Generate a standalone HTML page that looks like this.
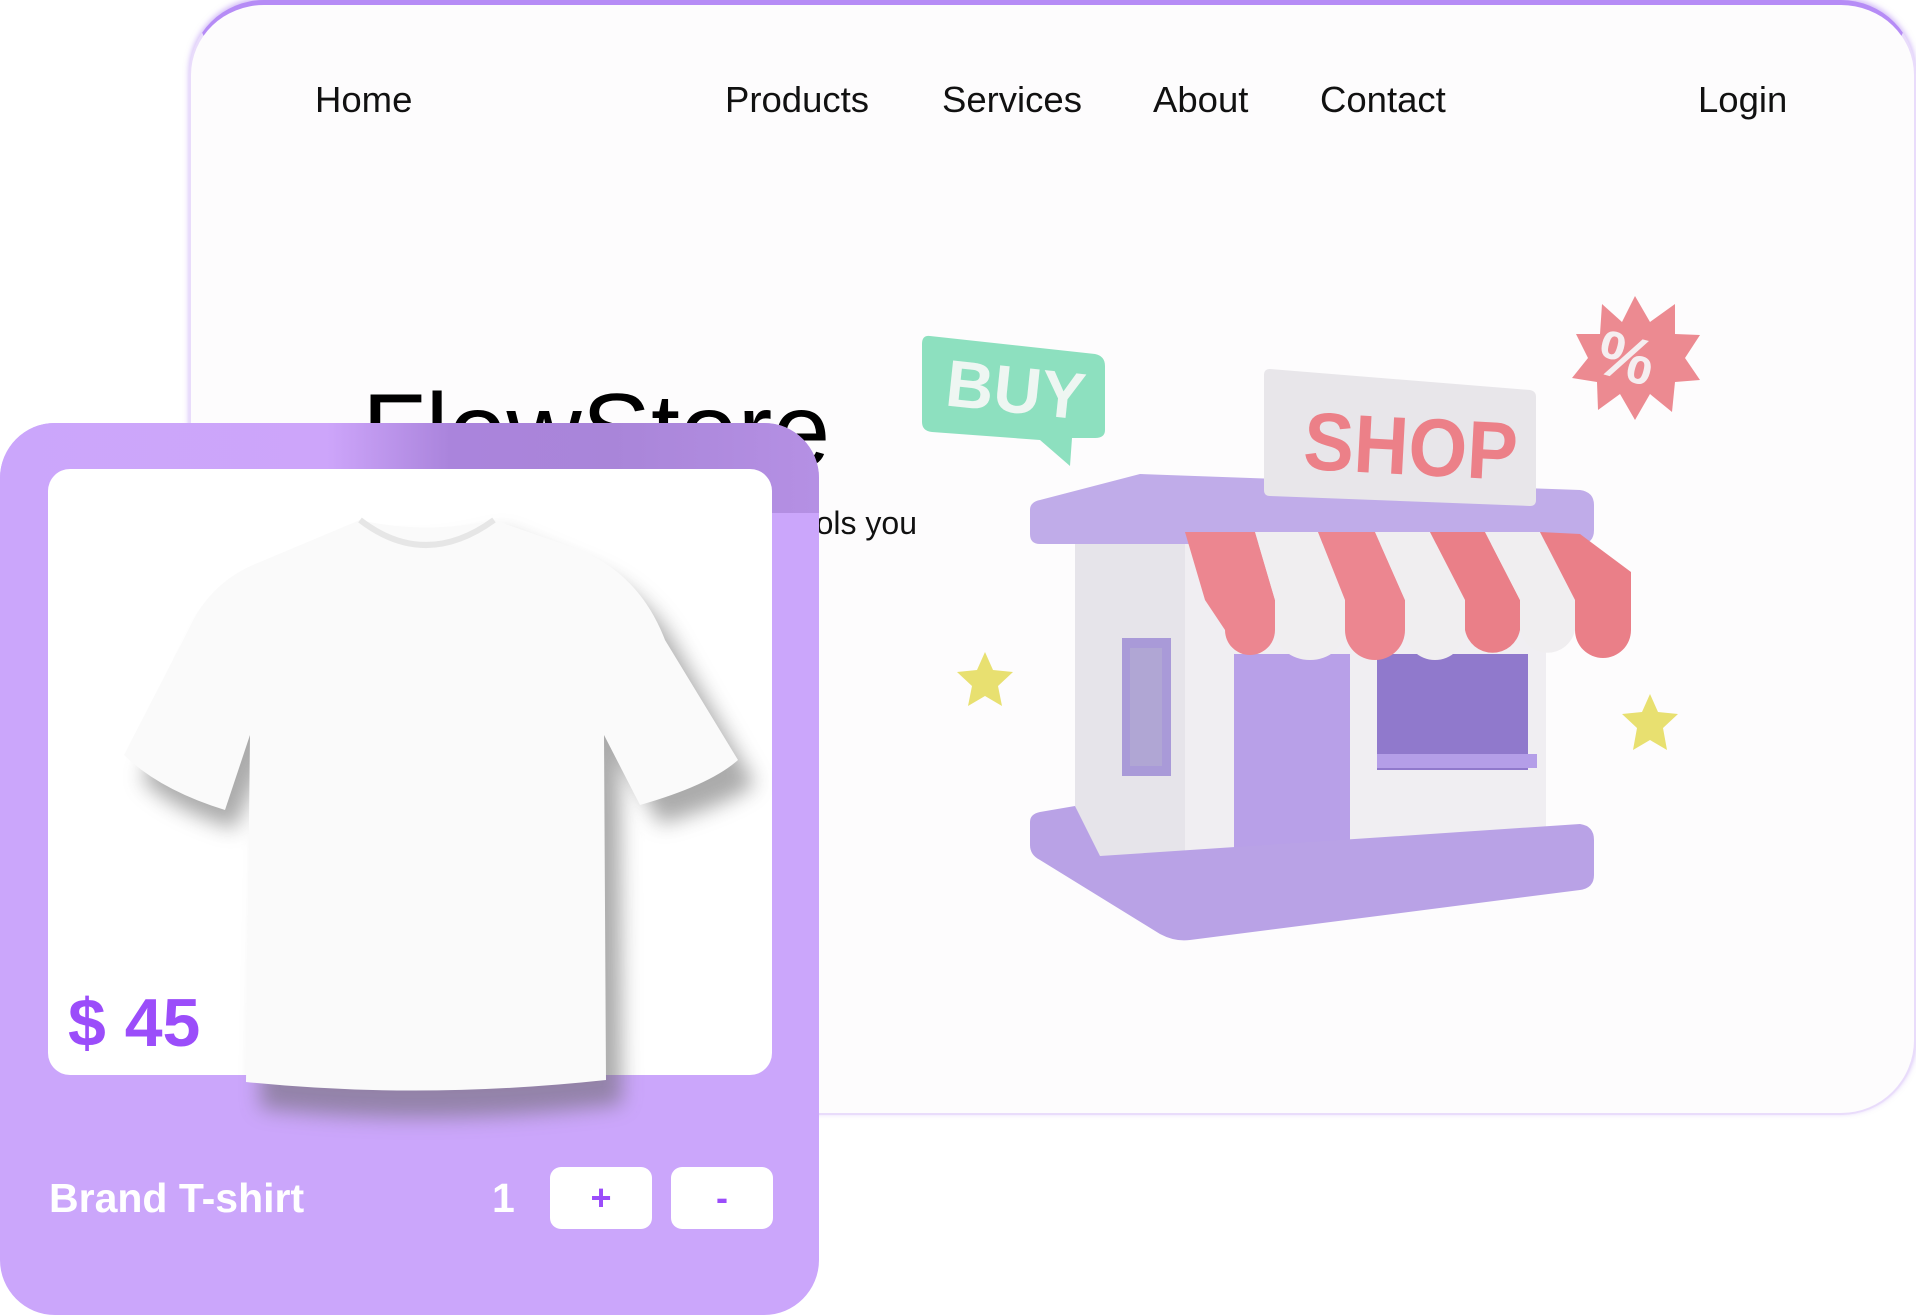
<!DOCTYPE html>
<html><head><meta charset="utf-8"><style>
*{margin:0;padding:0;box-sizing:border-box}
body{width:1916px;height:1315px;background:#fff;position:relative;overflow:hidden;font-family:"Liberation Sans",sans-serif}
.panel{position:absolute;left:189px;top:0;width:1727px;height:1115px;background:#fdfcfd;border-radius:75px;border:2px solid #e9dcfb;border-top:5px solid #b68cf6;box-shadow:0 -2px 6px rgba(160,110,240,.5)}
.nav{position:absolute;top:79px;font-size:36.5px;color:#111}
.h1{position:absolute;left:362px;top:372px;font-size:104px;color:#000}
.sub{position:absolute;right:999px;top:505px;font-size:32px;color:#111}
.card{position:absolute;left:0;top:423px;width:819px;height:892px;border-radius:55px;background:#cba6fb;overflow:hidden}
.strip{position:absolute;left:0;top:0;width:819px;height:90px;background:linear-gradient(90deg,#cba6fb 0%,#cda5fa 40%,#aa84dc 55%,#a985d9 75%,#b590e4 100%)}
.inner{position:absolute;left:48px;top:46px;width:724px;height:606px;background:#fff;border-radius:22px}
.price{position:absolute;left:68px;top:984px;font-size:68px;font-weight:bold;color:#9b4dfa}
.name{position:absolute;left:49px;top:1175px;font-size:41px;font-weight:bold;color:#fff}
.qty{position:absolute;left:492px;top:1175px;font-size:41px;font-weight:bold;color:#fff}
.btn{position:absolute;top:1167px;width:102px;height:62px;background:#fff;border-radius:11px;color:#9b4dfa;font-size:36px;font-weight:bold;text-align:center;line-height:62px}
</style></head><body>
<div class="panel"></div>
<div class="nav" style="left:315px">Home</div>
<div class="nav" style="left:725px">Products</div>
<div class="nav" style="left:942px">Services</div>
<div class="nav" style="left:1153px">About</div>
<div class="nav" style="left:1320px">Contact</div>
<div class="nav" style="left:1698px">Login</div>
<div class="h1">FlowStore</div>
<div class="sub">Discover the tools you</div>

<svg style="position:absolute;left:0;top:0" width="1916" height="1315">
 <path d="M930 336 L1095 354 Q1105 356 1105 366 L1105 430 Q1105 438 1095 438 L1072 438 L1070 466 L1040 440 L932 432 Q922 431 922 422 L922 344 Q922 335 930 336Z" fill="#8de0bf"/>
 <text x="946" y="412" font-family="Liberation Sans" font-weight="bold" font-size="66" fill="#eef6f2" transform="rotate(6 1010 390)">BUY</text>
 <polygon points="1635,296 1650,322 1675,304 1675,334 1700,335 1685,358 1700,380 1675,382 1672,412 1650,394 1635,420 1620,394 1598,410 1597,382 1572,378 1588,358 1576,334 1600,334 1602,304 1622,322" fill="#ec8a91"/>
 <text x="1598" y="382" font-family="Liberation Sans" font-weight="bold" font-size="64" fill="#f5eef0" transform="rotate(15 1635 358)">%</text>
 <path d="M1040 500 L1140 474 L1580 490 Q1594 492 1594 505 L1594 530 Q1594 544 1580 544 L1080 544 L1040 544 Q1030 544 1030 534 L1030 510 Q1030 502 1040 500Z" fill="#c0ace9"/>
 <path d="M1270 369 L1530 390 Q1536 391 1536 397 L1536 500 Q1536 506 1530 506 L1270 496 Q1264 496 1264 490 L1264 375 Q1264 369 1270 369Z" fill="#e8e6ea"/>
 <text x="1304" y="474" font-family="Liberation Sans" font-weight="bold" font-size="82" fill="#ec8088" transform="rotate(3 1400 440)" textLength="214" lengthAdjust="spacingAndGlyphs">SHOP</text>
 <rect x="1075" y="544" width="471" height="320" fill="#f0eef2"/>
 <rect x="1075" y="544" width="110" height="320" fill="#e6e4ea"/>
 <rect x="1122" y="638" width="49" height="138" fill="#a99ad8"/>
 <rect x="1130" y="648" width="32" height="118" fill="#b0a6d4"/>
 <rect x="1234" y="654" width="116" height="214" fill="#b8a0e8"/>
 <rect x="1377" y="654" width="151" height="116" fill="#9079cc"/>
 <rect x="1377" y="754" width="160" height="14" fill="#b49ee8"/>
 <g>
  <path d="M1185 532 L1255 532 L1275 600 L1275 630 A25 25 0 0 1 1225 630 L1205 600Z" fill="#ec8690"/>
  <path d="M1255 532 L1318 532 L1345 600 L1345 630 A35 30 0 0 1 1275 630 L1275 600Z" fill="#f0eef0"/>
  <path d="M1318 532 L1375 532 L1405 600 L1405 630 A30 30 0 0 1 1345 630 L1345 600Z" fill="#ec8690"/>
  <path d="M1375 532 L1430 532 L1465 600 L1465 630 A30 30 0 0 1 1405 630 L1405 600Z" fill="#f0eef0"/>
  <path d="M1430 532 L1485 532 L1520 600 L1520 630 A28 28 0 0 1 1465 630 L1465 600Z" fill="#ea7f88"/>
  <path d="M1485 532 L1540 532 L1575 600 L1575 630 A28 28 0 0 1 1520 630 L1520 600Z" fill="#f0eef0"/>
  <path d="M1540 532 L1580 534 L1631 572 L1631 630 A28 28 0 0 1 1575 630 L1575 600Z" fill="#ea7f88"/>
 </g>
 <path d="M1040 812 L1075 806 L1100 856 L1580 824 Q1594 826 1594 840 L1594 875 Q1594 888 1580 890 L1190 940 Q1175 942 1160 934 L1040 860 Q1030 855 1030 845 L1030 822 Q1030 814 1040 812Z" fill="#b9a2e6"/>
 <polygon points="985,652 993,670 1013,672 998,686 1002,706 985,696 968,706 972,686 957,672 977,670" fill="#e8e070"/>
 <polygon points="1650,694 1658,712 1678,714 1663,728 1667,750 1650,740 1633,750 1637,728 1622,714 1642,712" fill="#e8e070"/>
</svg>

<div class="card">
 <div class="strip"></div>
 <div class="inner"></div>
</div>
<svg style="position:absolute;left:0;top:0" width="1916" height="1315">
 <defs><filter id="ts" x="-20%" y="-20%" width="140%" height="140%"><feGaussianBlur stdDeviation="10"/></filter></defs>
 <path d="M360 532 Q425 540 494 520 L580 556 Q640 580 670 640 L745 770 Q720 790 650 810 L610 740 L612 1090 Q420 1115 250 1094 L258 740 L225 815 Q160 795 132 765 L200 620 Q222 585 260 572Z" fill="#666" opacity=".55" filter="url(#ts)" transform="translate(10,14)"/>
 <path d="M360 520 Q425 535 494 520 L580 550 Q640 575 665 640 L738 760 Q710 785 640 805 L604 735 L606 1080 Q420 1100 246 1082 L250 735 L225 810 Q160 790 124 755 L196 615 Q218 578 260 562Z" fill="#fafafa"/>
 <path d="M360 520 Q425 570 494 520" fill="none" stroke="#e6e6e6" stroke-width="6"/>
</svg>
<div class="price">$ 45</div>
<div class="name">Brand T-shirt</div>
<div class="qty">1</div>
<div class="btn" style="left:550px">+</div>
<div class="btn" style="left:671px">-</div>
</body></html>
